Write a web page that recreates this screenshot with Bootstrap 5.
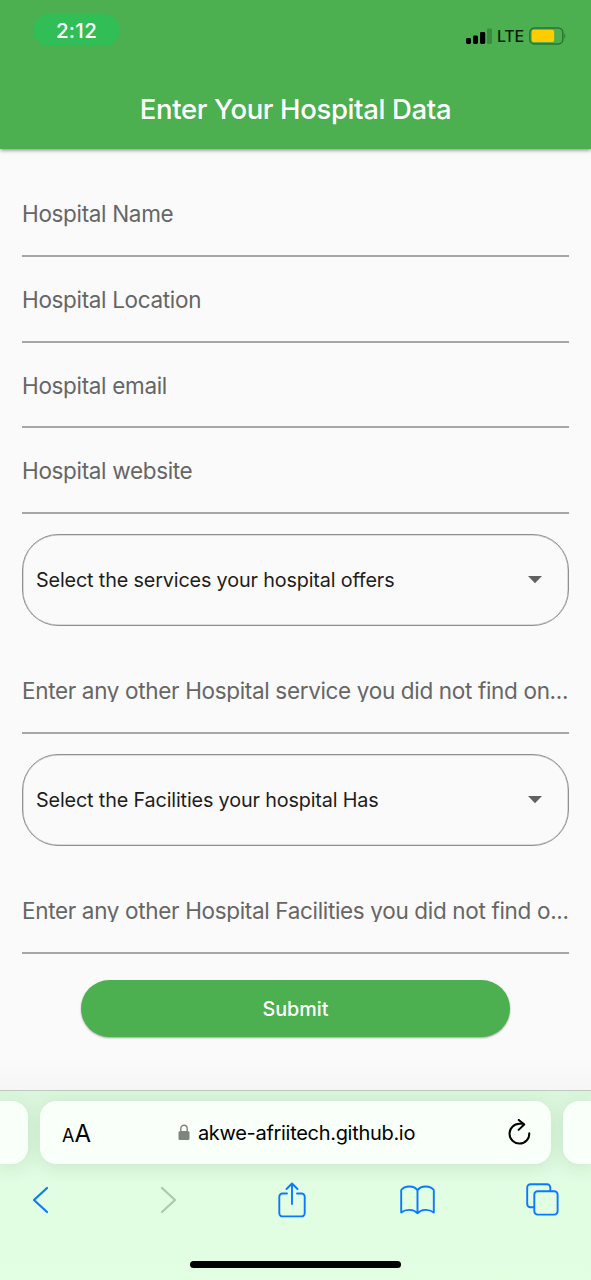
<!DOCTYPE html>
<html lang="en">
<head>
<meta charset="utf-8">
<meta name="viewport" content="width=device-width, initial-scale=1">
<title>Enter Your Hospital Data</title>
<link href="https://cdn.jsdelivr.net/npm/bootstrap@5.3.0/dist/css/bootstrap.min.css" rel="stylesheet">
<style>
  body { font-family: Inter, "Liberation Sans", sans-serif; background: #fafafa; height: 1280px; overflow: hidden; }
  svg { display: block; flex: none; }
  .app-header { height: 149px; background: #4caf50; box-shadow: 0 1px 4px rgba(0,0,0,.5); z-index: 1; }
  .status-row { height: 72px; padding: 14px 25px 0 33px; }
  .clock-pill { width: 87px; height: 32px; border-radius: 16px; background: #32be57; font-size: 20.5px; font-weight: 500; padding-top: 2px; letter-spacing: .3px; }
  .network { font-size: 16px; font-weight: 500; color: #0a1d0b; line-height: 20px; letter-spacing: -.2px; }
  .page-title { font-size: 27.5px; font-weight: 500; line-height: 36px; height: 77px; padding-top: 19px; letter-spacing: -.36px; }
  .hospital-form { height: 941px; padding: 22px 22px 0; background: linear-gradient(#fafafa 97%, #f6f6f6); }
  .line-field { height: 85.75px; border-bottom: 2px solid #a6a6a6; padding-top: 29px; color: #666; font-size: 22.5px; line-height: 28px; letter-spacing: -.33px; white-space: nowrap; }
  .line-field.late { height: 86px; margin-top: 22px; }
  .line-field.late span { display: block; height: 25px; margin-right: -8px; overflow: hidden; letter-spacing: -.335px; }
  .choice { height: 92px; margin-top: 20px; border: 1px solid #8f8f8f; box-shadow: inset 0 0 0 .5px #bbb; border-radius: 36px; padding: 1px 24px 0 13px; font-size: 19.8px; letter-spacing: -.15px; color: #1d1d1d; }
  .submit-btn, .submit-btn:hover { width: 429px; height: 57px; margin-top: 26px; padding-top: 8px; background: #4caf50; color: #fff; border: 0; font-size: 19.8px; font-weight: 500; box-shadow: 0 1px 2px rgba(0,0,0,.35); }
  .browser-bar { height: 190px; border-top: 1px solid #bfcabf; background: linear-gradient(#dbf6dd, #e1fde3 48%, #e2ffe2); }
  .tab-strip { padding-top: 10px; gap: 12px; height: 73px; }
  .tab-side { width: 28px; height: 63px; background: #f9fff9; box-shadow: 0 3px 18px rgba(40,90,40,.13); }
  .tab-side.start { border-radius: 0 16px 16px 0; }
  .tab-side.end { border-radius: 16px 0 0 16px; }
  .address { height: 63px; border-radius: 16px; background: #f9fff9; box-shadow: 0 3px 18px rgba(40,90,40,.13); padding: 0 20px 0 22px; color: #000; }
  .url-lock { margin-right: 8px; }
  .url-text { font-size: 20px; letter-spacing: -.3px; margin-right: 7px; }
  .text-size { width: 30px; line-height: 30px; padding-top: 4px; }
  .text-size .sm-a { font-size: 18px; }
  .text-size .lg-a { font-size: 24px; }
  .tool-row { height: 71px; padding: 0 31px 0 23px; }
  .tool { width: 35px; }
  .forward { margin-left: 5px; }
  .home-pill { width: 211px; height: 7px; border-radius: 4px; background: #000; margin-top: 26px; }
</style>
</head>
<body class="d-flex flex-column">
<header class="app-header position-relative">
  <div class="status-row d-flex justify-content-between align-items-start">
    <div class="clock-pill d-flex align-items-center justify-content-center text-white"><span>2:12</span></div>
    <div class="d-flex align-items-center mt-2 pt-1">
      <svg width="27" height="18" viewBox="0 0 27 18"><rect x="0" y="11" width="5" height="6" rx="1.4"/><rect x="7" y="8.500" width="5" height="8.500" rx="1.4"/><rect x="14" y="5" width="5.200" height="12" rx="1.4"/><rect x="21" y="1.500" width="5" height="15.500" rx="1.4" fill="#3a8b3e"/></svg>
      <span class="network ms-1">LTE</span>
      <svg class="ms-1" width="38" height="19" viewBox="0 0 38 19"><rect x="1.800" y=".9" width="33" height="16" rx="4.500" fill="none" stroke="#2e7431" stroke-width="1.500"/><rect x="3.700" y="2.800" width="22.500" height="12.300" rx="2.200" fill="#fc0"/><path d="M36.300 6.300q2.200 2.700 0 5.400z" fill="#2e7431"/></svg>
    </div>
  </div>
  <h1 class="page-title text-center text-white m-0">Enter Your Hospital Data</h1>
</header>

<main>
  <form class="hospital-form">
    <div class="line-field"><span>Hospital Name</span></div>
    <div class="line-field"><span>Hospital Location</span></div>
    <div class="line-field"><span>Hospital email</span></div>
    <div class="line-field"><span>Hospital website</span></div>
    <div class="choice d-flex align-items-center justify-content-between">
      <span>Select the services your hospital offers</span>
      <svg width="18" height="10" viewBox="0 0 18 10"><path d="M2 0h14L9 7.300z" fill="#616161"/></svg>
    </div>
    <div class="line-field late"><span>Enter any other Hospital service you did not find on...</span></div>
    <div class="choice d-flex align-items-center justify-content-between">
      <span>Select the Facilities your hospital Has</span>
      <svg width="18" height="10" viewBox="0 0 18 10"><path d="M2 0h14L9 7.300z" fill="#616161"/></svg>
    </div>
    <div class="line-field late"><span>Enter any other Hospital Facilities you did not find o...</span></div>
    <button type="button" class="submit-btn btn rounded-pill d-block mx-auto">Submit</button>
  </form>
</main>

<footer class="browser-bar">
  <div class="tab-strip d-flex">
    <div class="tab-side start"></div>
    <div class="address flex-grow-1 d-flex align-items-center justify-content-between">
      <div class="text-size text-nowrap"><span class="sm-a">A</span><span class="lg-a">A</span></div>
      <div class="d-flex align-items-center">
        <svg class="url-lock" width="12" height="17" viewBox="0 0 12 17"><rect x="0.500" y="7" width="11" height="9" rx="1.600" fill="#808480"/><path d="M2.800 7.500V4.500a3.200 3.200 0 0 1 6.400 0v3" fill="none" stroke="#808480" stroke-width="1.400"/></svg>
        <span class="url-text">akwe-afriitech.github.io</span>
      </div>
      <svg width="23" height="27" viewBox="0 0 23 27" fill="none" stroke="#000" stroke-width="2" stroke-linecap="round" stroke-linejoin="round"><path d="M21.300 14.300A9.900 9.900 0 1 1 11.500 4.800h4"/><path d="M10.800 .9l5.400 4.600-5.600 5.400"/></svg>
    </div>
    <div class="tab-side end"></div>
  </div>
  <div class="tool-row d-flex align-items-center justify-content-between">
    <div class="tool d-flex justify-content-center"><svg width="17" height="28" viewBox="0 0 17 28" fill="none" stroke="#087aff" stroke-width="2.200" stroke-linecap="round" stroke-linejoin="round"><path d="M15 2L2 14l13 12"/></svg></div>
    <div class="tool d-flex justify-content-center"><svg class="forward" width="17" height="28" viewBox="0 0 17 28" fill="none" stroke="#abc9ad" stroke-width="2.200" stroke-linecap="round" stroke-linejoin="round"><path d="M2 2l13 12L2 26"/></svg></div>
    <div class="tool d-flex justify-content-center"><svg width="28" height="36" viewBox="0 0 28 36" fill="none" stroke="#087aff" stroke-width="1.900" stroke-linecap="round" stroke-linejoin="round"><path d="M9 11.500H4.500a3.200 3.200 0 0 0-3.200 3.200v16.500a3.200 3.200 0 0 0 3.200 3.200h19a3.200 3.200 0 0 0 3.200-3.200V14.700a3.200 3.200 0 0 0-3.200-3.200H19"/><path d="M14 22V1.500M8.500 7L14 1.500 19.500 7"/></svg></div>
    <div class="tool d-flex justify-content-center"><svg width="35" height="30" viewBox="0 0 35 30" fill="none" stroke="#087aff" stroke-width="1.900" stroke-linecap="round" stroke-linejoin="round"><path d="M17.500 5.200C14 .5 5 .2 1.200 5v22.500c4.800-3.700 12.300-3.500 16.300.8 4-4.300 11.500-4.500 16.300-.8V5C30 .2 21 .5 17.500 5.200zM17.500 5.200v23"/></svg></div>
    <div class="tool d-flex justify-content-center"><svg width="33" height="33" viewBox="0 0 33 33" fill="none" stroke="#087aff" stroke-width="1.900" stroke-linejoin="round"><path d="M8 24.300H4.500a3.300 3.300 0 0 1-3.300-3.300V4.500a3.300 3.300 0 0 1 3.300-3.300H21a3.300 3.300 0 0 1 3.300 3.300V8"/><rect x="8.300" y="8.300" width="23.300" height="23.300" rx="3.300"/></svg></div>
  </div>
  <div class="home-pill mx-auto"></div>
</footer>
<script src="https://cdn.jsdelivr.net/npm/bootstrap@5.3.0/dist/js/bootstrap.bundle.min.js"></script>
</body>
</html>
